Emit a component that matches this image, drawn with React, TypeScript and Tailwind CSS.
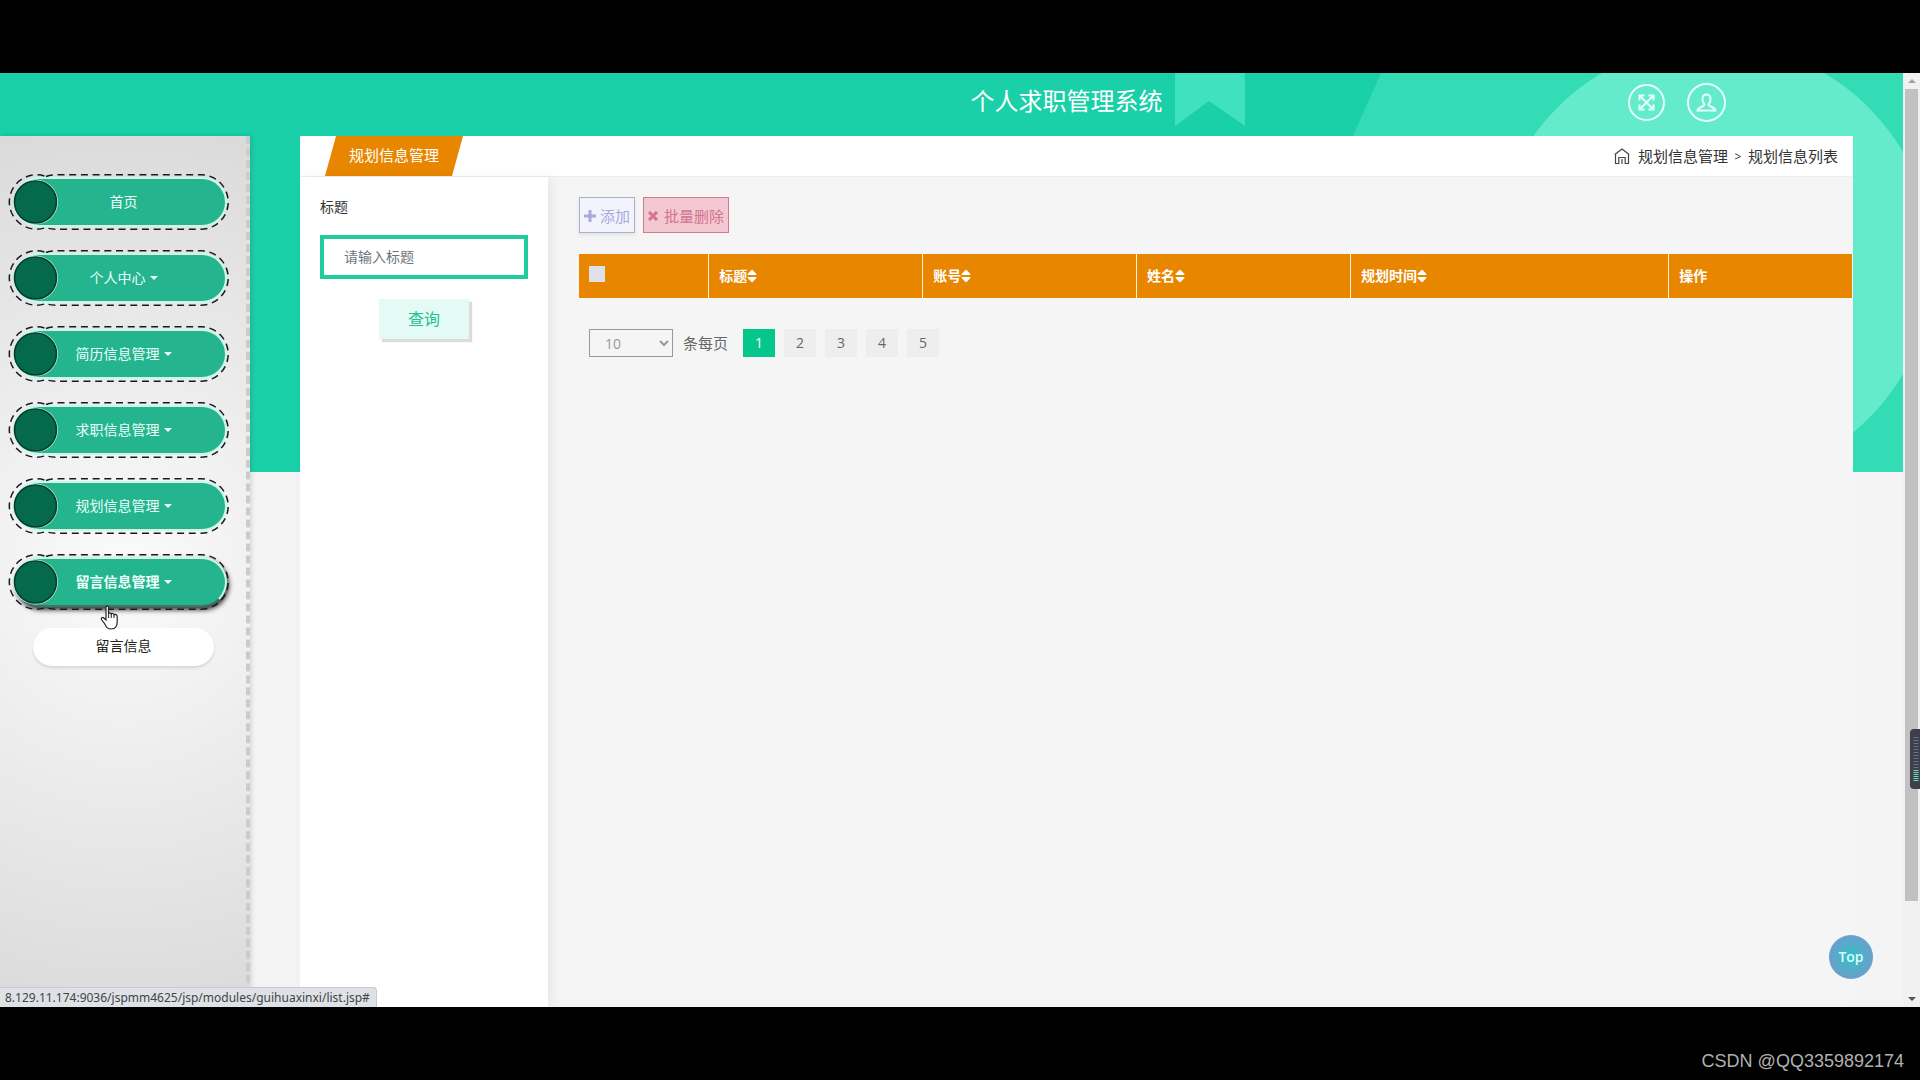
import { useState } from 'react';
import clsx from 'clsx';
import { FaSort } from 'react-icons/fa';

interface MenuItem {
  label: string;
  children?: string[];
}

const MENU: MenuItem[] = [
  { label: '首页' },
  { label: '个人中心', children: ['个人信息'] },
  { label: '简历信息管理', children: ['简历信息'] },
  { label: '求职信息管理', children: ['求职信息'] },
  { label: '规划信息管理', children: ['规划信息'] },
  { label: '留言信息管理', children: ['留言信息'] },
];

const COLUMNS = [
  { label: '标题', width: 'w-[16.8%]', sortable: true },
  { label: '账号', width: 'w-[16.8%]', sortable: true },
  { label: '姓名', width: 'w-[16.8%]', sortable: true },
  { label: '规划时间', width: 'w-[25%]', sortable: true },
  { label: '操作', width: 'w-auto', sortable: false },
];

const PAGES = [1, 2, 3, 4, 5];

// Decorative shapes behind the header and the right edge of the content
const Backdrop = () => (
  <div className="absolute inset-x-0 top-0 h-[399px] overflow-hidden bg-[#1ad0a8]">
    <svg className="absolute top-0 right-0" width="740" height="399" viewBox="0 0 740 399" aria-hidden="true">
      <path d="M12 0H82V53L46 28L12 53Z" fill="#40e1be" />
      <path d="M218 0L190 63C175 110 170 150 170 240V399H740V0Z" fill="#34dcb5" />
      <circle cx="550" cy="190" r="220" fill="#63ebcb" />
    </svg>
  </div>
);

const Header = () => (
  <header className="relative grid h-[63px] grid-cols-[1fr_auto_1fr] pl-[230px] text-white">
    <h1 className="col-start-2 pt-[10px] text-2xl leading-9">个人求职管理系统</h1>
    <div className="flex items-center justify-end gap-[22px] pr-[177px] pb-[4px]">
      <button type="button" aria-label="全屏">
        <svg width="37" height="37" viewBox="0 0 37 37" fill="none" stroke="#e6fff9" strokeWidth="2">
          <circle cx="18.5" cy="18.5" r="17.5" />
          <path d="M12.5 12.5L24.5 24.5M24.5 12.5L12.5 24.5" />
          <path d="M11.5 16.5V11.5H16.5M20.5 11.5H25.5V16.5M25.5 20.5V25.5H20.5M16.5 25.5H11.5V20.5" />
        </svg>
      </button>
      <button type="button" aria-label="个人中心">
        <svg width="39" height="39" viewBox="0 0 39 39" fill="none" stroke="#e6fff9" strokeWidth="2">
          <circle cx="19.5" cy="19.5" r="18.5" />
          <path d="M17.500 21.500C14.500 18 14.500 11.500 19.500 11.500S24.500 18 21.500 21.500C21.500 24 28 23.500 28.500 27.500H10.500C11 23.500 17.500 24 17.500 21.500Z" />
        </svg>
      </button>
    </div>
  </header>
);

interface MenuButtonProps {
  item: MenuItem;
  open: boolean;
  onToggle: () => void;
}

const MenuButton = ({ item, open, onToggle }: MenuButtonProps) => (
  <div className="relative h-14 py-[3px] pr-[3px] pl-[6px]">
    <button
      type="button"
      aria-expanded={item.children ? open : undefined}
      onClick={onToggle}
      className={clsx(
        'flex h-[50px] w-full items-center justify-center gap-1 rounded-full border-2 border-[#c9f7ea] bg-[#24b58f] pl-[6px] text-sm text-[#ecfffa]',
        open && 'border-[#8fcab9] border-b-[#3c7768] font-bold shadow-[2px_3px_5px_#333]'
      )}
    >
      {item.label}
      {item.children && (
        <svg width="8" height="4" viewBox="0 0 8 4" aria-hidden="true">
          <path d="M0 0H8L4 4Z" fill="currentColor" />
        </svg>
      )}
    </button>
    <svg className="pointer-events-none absolute inset-0" width="222" height="56" viewBox="0 0 222 56" fill="none" aria-hidden="true">
      <circle cx="27.500" cy="28" r="22.500" fill="#bdf5e4" />
      <circle cx="27.500" cy="28" r="21" fill="#046a4b" stroke="#043d2c" strokeWidth="1.500" />
      <path
        d="M38 2.500C42 .8 46 .8 50 .8H193A27.200 27.200 0 0 1 193 55.200H50C46 55.200 42 55.200 38 53.500A27.200 27.200 0 1 1 38 2.500"
        stroke="#1a1a1a"
        strokeWidth="1.500"
        strokeDasharray="7 4.700"
      />
    </svg>
  </div>
);

const HandCursor = () => (
  <svg className="pointer-events-none absolute top-[51px] left-[92px]" width="19" height="25" viewBox="0 0 19 25" aria-hidden="true">
    <path
      d="M6 2.200C6 .5 8.500 .5 8.500 2.200V8.500C9 7.500 11 7.600 11.200 9C12 8.100 13.700 8.400 14 9.700C15 9 17.200 9.500 17.200 11.500V16.500C17.200 21 15.500 24 11.500 24C7 24 6.500 22 4.500 18.500L1.500 14.500C.8 13 2.500 11.800 3.800 13L6 15Z"
      fill="white"
      stroke="#222"
      strokeWidth="1.200"
    />
    <path d="M8.600 8V13M11.300 9V13M14 10V13" stroke="#222" fill="none" />
  </svg>
);

const Sidebar = () => {
  const [openItem, setOpenItem] = useState('留言信息管理');

  return (
    <nav className="relative w-[250px] shrink-0 border-r-4 border-dashed border-[#ccc] bg-[radial-gradient(circle,#fbfbfb,#dadada)] pt-[38px] pl-2 shadow-[1px_0_5px_rgba(0,0,0,0.15)]">
      <ul className="flex w-[222px] flex-col gap-5">
        {MENU.map((item) => {
          const open = openItem === item.label;
          return (
            <li key={item.label} className="relative">
              <MenuButton item={item} open={open} onToggle={() => setOpenItem(open ? '' : item.label)} />
              {open && item.children?.map((child) => (
                <a
                  key={child}
                  href="#"
                  className="mt-[18px] mr-4 ml-[25px] block h-[38px] rounded-full bg-white text-center text-sm leading-9 text-[#222] shadow-[0_2px_3px_rgba(0,0,0,0.12)]"
                >
                  {child}
                </a>
              ))}
              {open && <HandCursor />}
            </li>
          );
        })}
      </ul>
    </nav>
  );
};

const PageHeading = () => (
  <div className="flex h-[41px] items-center justify-between border-b border-[#eee] bg-white pr-[15px] pl-[25px] text-[15px]">
    <h2 className="h-10 w-[138px] bg-[#e98600] text-center leading-[39px] text-white [clip-path:polygon(11px_0,100%_0,127px_100%,0_100%)]">
      规划信息管理
    </h2>
    <div className="flex items-center pt-px text-[#333]">
      <svg className="mr-2" width="16" height="17" viewBox="0 0 16 17" fill="none" stroke="#444" strokeWidth="1.200" aria-hidden="true">
        <path d="M.8 6.500L8 1L15.200 6.500M1.500 6V15.500H4.800V9.500H11.200V15.500H14.500V6M8 11V16" />
      </svg>
      <a href="#">规划信息管理</a>
      <span className="w-5 text-center text-xs">&gt;</span>
      <span>规划信息列表</span>
    </div>
  </div>
);

const SearchPanel = () => (
  <form className="relative w-[248px] shrink-0 bg-white px-5 pt-5 shadow-[4px_0_10px_rgba(0,0,0,0.06)]">
    <label htmlFor="title" className="block text-sm text-[#333]">标题</label>
    <input
      id="title"
      type="text"
      placeholder="请输入标题"
      className="mt-[18px] h-11 w-full border-4 border-[#20cba2] bg-white px-5 pb-[2px] text-sm text-[#495057] outline-none placeholder:text-[#6c757d]"
    />
    <button
      type="button"
      className="mx-auto mt-5 block h-10 w-[90px] bg-[#e4faf4] text-base text-[#1fc196] shadow-[3px_3px_1px_#dcdcdc]"
    >
      查询
    </button>
  </form>
);

const DataTable = () => (
  <table className="mt-[21px] w-full table-fixed border-collapse text-sm text-white">
    <thead>
      <tr className="h-11 bg-[#e98600] text-left">
        <th className="w-[10.2%] px-[10px] pb-1">
          <input
            type="checkbox"
            aria-label="全选"
            className="block size-4 appearance-none bg-[#dfe0ea] checked:bg-[#1ad0a8]"
          />
        </th>
        {COLUMNS.map((col) => (
          <th key={col.label} className={clsx('border-l border-[#fff3e0] px-[10px] font-bold', col.width)}>
            <span className="flex items-center">
              {col.label}
              {col.sortable && <FaSort className="h-4 w-[10px]" />}
            </span>
          </th>
        ))}
      </tr>
    </thead>
  </table>
);

const Pagination = () => {
  const [page, setPage] = useState(1);

  return (
    <div className="mt-[31px] flex items-center pl-[10px] text-[15px] text-[#666]">
      <select
        id="page-size"
        defaultValue="10"
        className="h-7 w-[84px] border border-[#999] bg-transparent pl-[11px] text-sm text-[#999]"
      >
        <option>10</option>
        <option>20</option>
        <option>50</option>
      </select>
      <label htmlFor="page-size" className="ml-[10px]">条每页</label>
      <div className="ml-[15px] flex gap-[9px]">
        {PAGES.map((n) => (
          <button
            key={n}
            type="button"
            onClick={() => setPage(n)}
            className={clsx('h-7 w-8 text-sm', n === page ? 'bg-[#05c78c] text-white' : 'bg-[#eee] text-[#666]')}
          >
            {n}
          </button>
        ))}
      </div>
    </div>
  );
};

const ListPanel = () => (
  <section className="min-w-0 flex-1 bg-[#f5f5f5] pt-5 pr-px pl-[31px]">
    <div className="flex gap-2 text-[15px]">
      <button
        type="button"
        className="flex h-9 w-[56px] items-center justify-center gap-1 border border-[#aab0cc] bg-[#f3f3fc] pt-[2px] text-[#a9aadb] shadow-[0_2px_4px_rgba(0,0,0,0.08)]"
      >
        <svg width="12" height="12" viewBox="0 0 12 12" stroke="currentColor" strokeWidth="3" aria-hidden="true">
          <path d="M6 0V12M0 6H12" />
        </svg>
        添加
      </button>
      <button
        type="button"
        className="flex h-9 w-[86px] items-center justify-center gap-[6px] border border-[#cf7a93] bg-[#f3c8d2] pt-[2px] text-[#d2748e]"
      >
        <svg width="10" height="10" viewBox="0 0 10 10" stroke="currentColor" strokeWidth="3" aria-hidden="true">
          <path d="M1 1L9 9M9 1L1 9" />
        </svg>
        批量删除
      </button>
    </div>
    <DataTable />
    <Pagination />
  </section>
);

const Scrollbar = () => (
  <div className="relative flex w-[17px] shrink-0 flex-col items-center bg-[#f1f1f1]">
    <svg className="h-4" width="8" height="16" viewBox="0 0 8 16" aria-hidden="true">
      <path d="M0 10L4 6L8 10Z" fill="#a3a3a3" />
    </svg>
    <div className="w-[13px] flex-[812] bg-[#c1c1c1]" />
    <div className="flex-[90]" />
    <svg className="h-4" width="8" height="16" viewBox="0 0 8 16" aria-hidden="true">
      <path d="M0 6L4 10L8 6Z" fill="#505050" />
    </svg>
    {/* Level meter docked on the window edge */}
    <svg className="absolute right-0 bottom-[218px]" width="10" height="60" viewBox="0 0 10 60" aria-hidden="true">
      <path d="M10 0H4Q0 0 0 4V56Q0 60 4 60H10Z" fill="#3d3f4a" />
      <path d="M6 8V41" stroke="#6c6f85" strokeWidth="5" strokeDasharray="1 2" />
      <path d="M6 41V53" stroke="#6fd8b4" strokeWidth="5" strokeDasharray="1 1" />
    </svg>
  </div>
);

export default function App() {
  return (
    <div className="flex min-h-screen flex-col bg-black pt-[73px] font-['Open_Sans','Noto_Sans_CJK_SC',sans-serif]">
      <div className="flex flex-1">
        <div className="relative flex min-w-0 flex-1 flex-col bg-[#f4f4f4]">
          <Backdrop />
          <Header />
          <div className="relative flex flex-1">
            <Sidebar />
            <main className="mr-[50px] ml-[50px] flex min-w-0 flex-1 flex-col">
              <PageHeading />
              <div className="flex flex-1">
                <SearchPanel />
                <ListPanel />
              </div>
            </main>
          </div>
          <button
            type="button"
            className="absolute right-[30px] bottom-7 size-11 rounded-full bg-[radial-gradient(circle,#35bfc5,#8092d0)] text-sm font-semibold text-[#d8fffb]"
          >
            Top
          </button>
          <div className="absolute bottom-0 left-0 h-5 rounded-tr border-t border-r border-[#c8c9cc] bg-[#dee1e6] pr-[6px] pl-[5px] font-['Noto_Sans',sans-serif] text-xs leading-5 text-[#444]">
            8.129.11.174:9036/jspmm4625/jsp/modules/guihuaxinxi/list.jsp#
          </div>
        </div>
        <Scrollbar />
      </div>
      <footer className="flex h-[73px] items-end justify-end pr-4 pb-[5px] font-['Liberation_Sans',sans-serif] text-lg text-[#b0b0b0]">
        CSDN @QQ3359892174
      </footer>
    </div>
  );
}
